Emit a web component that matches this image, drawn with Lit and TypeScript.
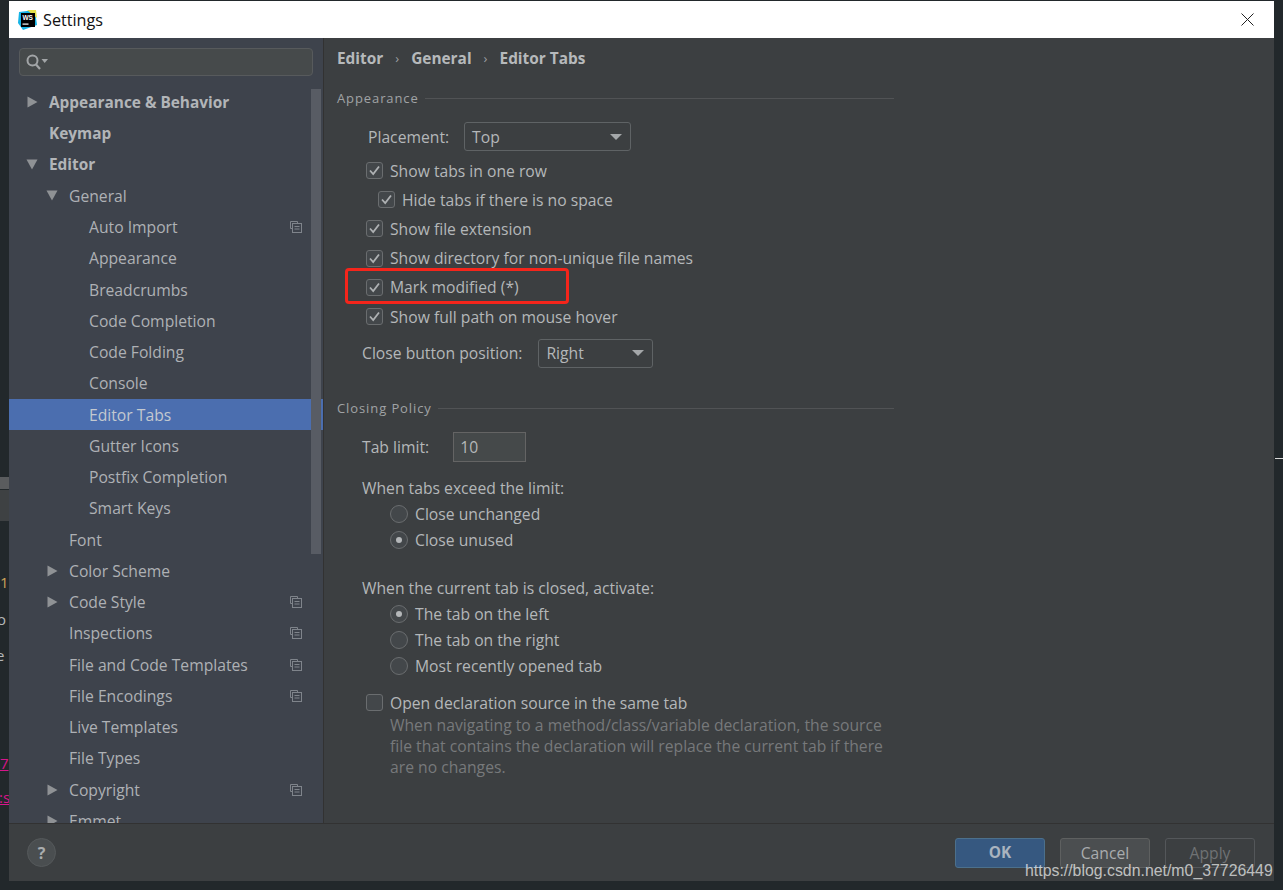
import { LitElement, html, css, svg } from "lit";
import { customElement } from "lit/decorators.js";

type Row = { t: string; l: number; arrow?: "r" | "d"; bold?: boolean; copy?: boolean; sel?: boolean };
const rows: Row[] = [
  { t: "Appearance & Behavior", l: 0, arrow: "r", bold: true },
  { t: "Keymap", l: 0, bold: true },
  { t: "Editor", l: 0, arrow: "d", bold: true },
  { t: "General", l: 1, arrow: "d" },
  { t: "Auto Import", l: 2, copy: true },
  { t: "Appearance", l: 2 },
  { t: "Breadcrumbs", l: 2 },
  { t: "Code Completion", l: 2 },
  { t: "Code Folding", l: 2 },
  { t: "Console", l: 2 },
  { t: "Editor Tabs", l: 2, sel: true },
  { t: "Gutter Icons", l: 2 },
  { t: "Postfix Completion", l: 2 },
  { t: "Smart Keys", l: 2 },
  { t: "Font", l: 1 },
  { t: "Color Scheme", l: 1, arrow: "r" },
  { t: "Code Style", l: 1, arrow: "r", copy: true },
  { t: "Inspections", l: 1, copy: true },
  { t: "File and Code Templates", l: 1, copy: true },
  { t: "File Encodings", l: 1, copy: true },
  { t: "Live Templates", l: 1 },
  { t: "File Types", l: 1 },
  { t: "Copyright", l: 1, arrow: "r", copy: true },
  { t: "Emmet", l: 1, arrow: "r" },
];

const copyIcon = svg`<svg class="copy" width="12" height="12" viewBox="0 0 12 12" fill="none" stroke="#7f848b" stroke-width="1"><path d="M7.5 2.5v-2h-7v7h2"/><rect x="2.5" y="2.5" width="9" height="9"/><path d="M4.5 5.5h5M4.5 8h5"/></svg>`;

@customElement("app-root")
export class AppRoot extends LitElement {
  static styles = css`
    :host { display: block; width: 1283px; height: 890px; position: relative; overflow: hidden; background: #22282b; font-family: "Open Sans", "Liberation Sans", sans-serif; font-size: 15.7px; color: #b4b7b9; }
    .bit { position: absolute; font-size: 15px; line-height: 20px; }
    .band { position: absolute; left: 0; width: 9px; }
    .win { margin: 1px 0 0 9px; width: 1265px; height: 880px; display: flex; flex-direction: column; background: #3c3f41; position: relative; }
    .title { height: 37px; flex: none; background: #fff; display: flex; align-items: center; padding-left: 9px; color: #111; gap: 6px; font-size: 16.2px; }
    .title .close { margin-left: auto; margin-right: 20px; display: flex; }
    .body { flex: 1; min-height: 0; display: flex; }
    .side { width: 314px; flex: none; background: #3e434c; border-right: 1px solid #323232; display: flex; flex-direction: column; position: relative; overflow: hidden; }
    .search { margin: 10px 10px 0 10px; height: 28px; flex: none; background: #464a4b; border: 1px solid #575a5c; border-radius: 4px; display: flex; align-items: center; padding-left: 6px; box-sizing: border-box; width: 294px; }
    .tree { margin-top: 10.5px; }
    .row { height: 31.25px; display: flex; align-items: center; position: relative; white-space: nowrap; color: #aeb1b5; }
    .row.bold { font-weight: 700; font-size: 15.4px; color: #b2b5b8; }
    .row.sel { background: #4b6eaf; color: #c3c9d0; }
    .tri { position: absolute; top: 50%; margin-top: -6px; }
    .copy { position: absolute; left: 281px; top: 50%; margin-top: -6px; }
    .scroll { position: absolute; left: 302px; top: 51px; width: 10px; height: 465px; background: #585c64; }
    .main { flex: 1; padding: 0 0 0 13px; min-width: 0; position: relative; }
    .crumbs { height: 40px; display: flex; align-items: center; gap: 12px; font-weight: 700; font-size: 15.4px; color: #b6b9bb; margin-bottom: 10px; }
    .crumbs .sep { font-weight: 400; font-size: 13px; color: #9a9da0; }
    .sec { display: flex; align-items: center; width: 557px; height: 20px; gap: 6px; font-size: 13px; letter-spacing: 0.9px; color: #a0a3a5; }
    .sec::after { content: ""; flex: 1; height: 1px; background: #515355; }
    .line { display: flex; align-items: center; white-space: nowrap; height: 29.2px; }
    .sel-box { box-sizing: border-box; height: 29px; background: #3c3f41; border: 1px solid #5f6365; border-radius: 3px; display: flex; align-items: center; justify-content: space-between; padding: 0 7px; color: #b4b7b9; }
    .caret { width: 0; height: 0; border-left: 6px solid transparent; border-right: 6px solid transparent; border-top: 6px solid #a4a7a9; margin-right: 1px; }
    .cb { width: 17px; height: 17px; box-sizing: border-box; border: 1px solid #6a6d6f; border-radius: 3px; background: #43474a; flex: none; margin-right: 7px; display: flex; align-items: center; justify-content: center; }
    .rd { width: 18px; height: 18px; box-sizing: border-box; border: 1px solid #6a6d6f; border-radius: 50%; background: #43474a; flex: none; margin-right: 7px; display: flex; align-items: center; justify-content: center; }
    .rd.on::after { content: ""; width: 6px; height: 6px; border-radius: 50%; background: #b4b7b9; }
    .ind29 { padding-left: 29px; }
    .ind41 { padding-left: 41px; }
    .ind31 { padding-left: 31px; }
    .ind25 { padding-left: 25px; }
    .ind53 { padding-left: 53px; }
    .r26 { height: 26px; }
    .input { box-sizing: border-box; width: 73px; height: 30px; background: #45494a; border: 1px solid #646464; padding-left: 6px; display: flex; align-items: center; margin-left: 24px; }
    .hint { padding-left: 53px; margin-top: -2px; color: #77797b; line-height: 21px; width: 498px; }
    .foot { height: 58px; flex: none; border-top: 1px solid #323232; display: flex; align-items: center; padding: 0 19px 0 18px; box-sizing: border-box; position: relative; }
    .help { width: 29px; height: 29px; border-radius: 50%; box-sizing: border-box; background: #4a4e50; border: 1px solid #55595b; color: #a9acae; display: flex; align-items: center; justify-content: center; font-weight: 700; font-size: 16px; }
    .btns { margin-left: auto; display: flex; gap: 15px; }
    .btn { width: 90px; height: 30px; box-sizing: border-box; border-radius: 3px; border: 1px solid #5e6060; background: #4b4e50; display: flex; align-items: center; justify-content: center; color: #a9acae; }
    .btn.ok { background: #365880; border-color: #4c708c; font-weight: 700; font-size: 15.4px; color: #aab4bf; }
    .btn.off { background: #3c3f41; border-color: #54575a; color: #6f7274; }
    .mark { position: absolute; left: 336px; top: 267px; width: 224px; height: 36px; box-sizing: border-box; border: 3px solid #f5251b; border-radius: 4px; }
    .wm { position: absolute; left: 1025px; top: 862px; font-family: "Liberation Sans", Arial, sans-serif; font-size: 15.87px; line-height: 18px; color: rgba(255,255,255,.68); white-space: nowrap; }
  `;

  tick() {
    return svg`<svg width="13" height="13" viewBox="0 0 13 13" fill="none" stroke="#aeb1b3" stroke-width="1.8"><path d="M2 6.5l3.2 3.5L11 2.5"/></svg>`;
  }
  check(t: string, cls = "ind29", on = true) {
    return html`<div class="line ${cls}"><span class="cb">${on ? this.tick() : ""}</span>${t}</div>`;
  }
  radio(t: string, on = false) {
    return html`<div class="line ind53 r26"><span class="rd ${on ? "on" : ""}"></span>${t}</div>`;
  }

  row(r: Row) {
    const pad = [40, 60, 80][r.l];
    const tx = [18, 38][r.l];
    return html`<div class="row ${r.bold ? "bold" : ""} ${r.sel ? "sel" : ""}" style="padding-left:${pad}px">
      ${r.arrow === "r"
        ? svg`<svg class="tri" style="left:${tx}px" width="11" height="12" viewBox="0 0 11 12"><path d="M0.5 0.5L10.5 6L0.5 11.5Z" fill="#8f9295"/></svg>`
        : r.arrow === "d"
        ? svg`<svg class="tri" style="left:${tx - 1}px" width="12" height="11" viewBox="0 0 12 11"><path d="M0.5 0.5H11.5L6 10.5Z" fill="#8f9295"/></svg>`
        : ""}
      ${r.t}${r.copy ? copyIcon : ""}
    </div>`;
  }

  render() {
    return html`
      <div class="band" style="top:477px;height:12px;background:#5a5c5e"></div>
      <div class="band" style="top:490px;height:31px;background:#3e4143"></div>
      <span class="bit" style="left:0;top:572px;color:#c9a35a">1:</span>
      <span class="bit" style="left:-3px;top:609px;color:#b4b7b9">o</span>
      <span class="bit" style="left:-4px;top:645px;color:#b4b7b9">e</span>
      <span class="bit" style="left:0;top:753px;color:#d6168a;text-decoration:underline">7</span>
      <span class="bit" style="left:-1px;top:787px;color:#d6168a;text-decoration:underline">:s</span>
      <div style="position:absolute;left:1275px;top:458px;width:8px;height:1px;background:#d8d8d8"></div>
      <div class="win">
        <div class="title">
          <svg width="19" height="20" viewBox="0 0 19 20">
            <path d="M1 2L17 0L19 15L5 20L0 13Z" fill="#16b4e6"/>
            <path d="M9 0L18 0L19 8Z" fill="#e6e04a"/>
            <rect x="3" y="3" width="14" height="14" fill="#000"/>
            <text x="4.4" y="10" font-size="6.5" font-weight="700" fill="#fff" font-family="Liberation Sans">WS</text>
            <rect x="4.5" y="13.5" width="6" height="1.2" fill="#fff"/>
          </svg>
          <span>Settings</span>
          <span class="close"><svg width="13" height="13" viewBox="0 0 13 13" stroke="#222" stroke-width="1" fill="none"><path d="M0.5 0.5L12.5 12.5M12.5 0.5L0.5 12.5"/></svg></span>
        </div>
        <div class="body">
          <div class="side">
            <div class="search">
              <svg width="24" height="17" viewBox="0 0 24 17" fill="none"><circle cx="6.5" cy="6.5" r="5" stroke="#a2a5a7" stroke-width="2"/><path d="M10 10.5L14 15" stroke="#a2a5a7" stroke-width="2.2"/><path d="M15.5 5H22L18.7 9Z" fill="#a2a5a7"/></svg>
            </div>
            <div class="tree">${rows.map((r) => this.row(r))}</div>
            <div class="scroll"></div>
          </div>
          <div class="main">
            <div class="crumbs"><span>Editor</span><span class="sep">›</span><span>General</span><span class="sep">›</span><span>Editor Tabs</span></div>
            <div class="sec">Appearance</div>
            <div class="line ind31" style="height:39px;margin-top:9px">Placement:<span class="sel-box" style="width:167px;margin-left:15px">Top<span class="caret"></span></span></div>
            ${this.check("Show tabs in one row")}
            ${this.check("Hide tabs if there is no space", "ind41")}
            ${this.check("Show file extension")}
            ${this.check("Show directory for non-unique file names")}
            ${this.check("Mark modified (*)")}
            ${this.check("Show full path on mouse hover")}
            <div class="line ind25" style="height:40px;margin-top:2px">Close button position:<span class="sel-box" style="width:115px;margin-left:16px">Right<span class="caret"></span></span></div>
            <div class="sec" style="margin-top:25px">Closing Policy</div>
            <div class="line ind25" style="height:32px;margin-top:13px">Tab limit:<span class="input">10</span></div>
            <div class="line ind25 r26" style="margin-top:12px">When tabs exceed the limit:</div>
            ${this.radio("Close unchanged")}
            ${this.radio("Close unused", true)}
            <div class="line ind25 r26" style="margin-top:22px">When the current tab is closed, activate:</div>
            ${this.radio("The tab on the left", true)}
            ${this.radio("The tab on the right")}
            ${this.radio("Most recently opened tab")}
            <div style="height:9px"></div>
            ${this.check("Open declaration source in the same tab", "ind29", false)}
            <div class="hint">When navigating to a method/class/variable declaration, the source file that contains the declaration will replace the current tab if there are no changes.</div>
          </div>
        </div>
        <div class="foot">
          <div class="help">?</div>
          <div class="btns">
            <div class="btn ok">OK</div>
            <div class="btn">Cancel</div>
            <div class="btn off">Apply</div>
          </div>
        </div>
        <div class="mark"></div>
      </div>
      <div class="wm">https://blog.csdn.net/m0_37726449</div>
    `;
  }
}
